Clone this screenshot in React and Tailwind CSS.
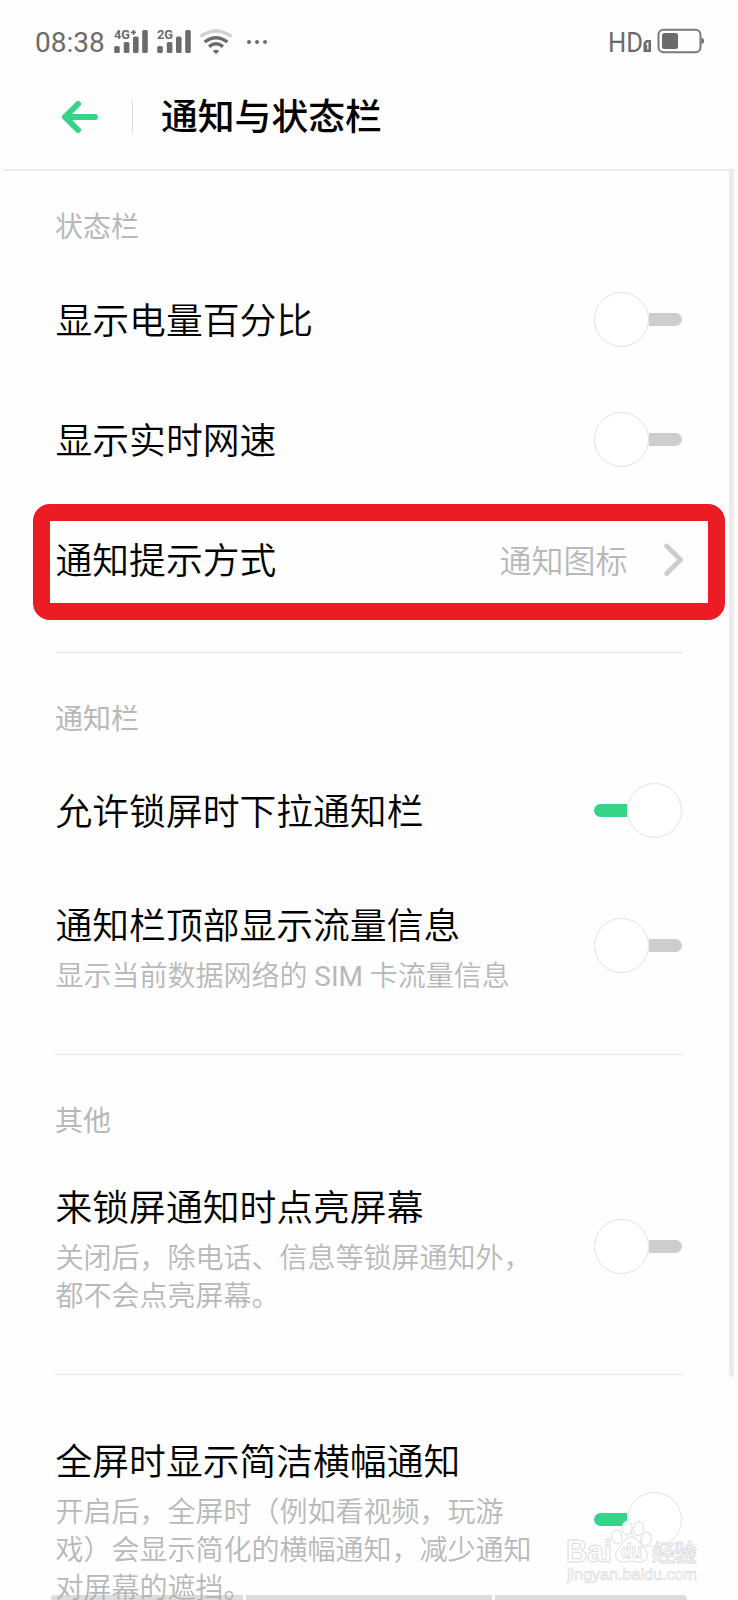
import React, { useState } from "react";

const sections = [
  {
    title: "状态栏",
    items: [
      { id: "battery", label: "显示电量百分比", on: false },
      { id: "speed", label: "显示实时网速", on: false },
      { id: "style", label: "通知提示方式", value: "通知图标" },
    ],
  },
  {
    title: "通知栏",
    items: [
      { id: "pulldown", label: "允许锁屏时下拉通知栏", on: true },
      {
        id: "traffic",
        label: "通知栏顶部显示流量信息",
        lines: [<>显示当前数据网络的 <span className="font-normal">SIM</span> 卡流量信息</>],
        on: false,
      },
    ],
  },
  {
    title: "其他",
    items: [
      { id: "wake", label: "来锁屏通知时点亮屏幕", lines: ["关闭后，除电话、信息等锁屏通知外，", "都不会点亮屏幕。"], on: false },
    ],
  },
  {
    items: [
      {
        id: "banner",
        label: "全屏时显示简洁横幅通知",
        lines: ["开启后，全屏时（例如看视频，玩游", "戏）会显示简化的横幅通知，减少通知", "对屏幕的遮挡。"],
        on: true,
      },
    ],
  },
];

const Signal = ({ label, plus }) => (
  <svg width="35" height="28" viewBox="0 -1 35 28" fill="#6b6b6b">
    <rect x="0.2" y="17" width="5.6" height="7" rx="1.6" />
    <rect x="9.8" y="13" width="5.6" height="11" rx="1.6" />
    <rect x="19" y="7.5" width="5.6" height="16.5" rx="1.6" />
    <rect x="28.2" y="1" width="5.6" height="23" rx="1.6" />
    <text x="0" y="10" fontSize="12.5" fontWeight="700" textLength="16" lengthAdjust="spacingAndGlyphs">{label}</text>
    {plus && <path d="M17 3.4H22M19.5 0.9V5.9" stroke="#6b6b6b" strokeWidth="1.6" />}
  </svg>
);

const Wifi = () => (
  <svg width="34" height="26" viewBox="0 0 34 26" fill="none" strokeWidth="3.4">
    <path d="M1.5 7.5Q17 -3.5 32.5 7.5" stroke="#d2d2d2" />
    <path d="M5.6 13Q17 4.3 28.4 13" stroke="#6b6b6b" />
    <path d="M10 17.6Q17 12 24 17.6" stroke="#6b6b6b" />
    <path d="M14.2 22.2Q17 20 19.8 22.2L17 24.6Z" fill="#6b6b6b" stroke="#6b6b6b" strokeWidth="0.8" />
  </svg>
);

const StatusBar = () => (
  <div className="flex h-[84px] items-center justify-between pr-[34px] pl-[35px] text-[#6b6b6b]">
    <div className="flex items-center">
      <span className="w-[70px] pt-[2px] text-[28px] leading-[28px]">08:38</span>
      <div className="ml-[9px] flex items-center gap-[8px]">
        <Signal label="4G" plus />
        <Signal label="2G" />
      </div>
      <div className="ml-[7px]"><Wifi /></div>
      <div className="ml-[14px] flex gap-[4px]">
        <span className="size-1 rounded-full bg-[#6b6b6b]" />
        <span className="size-1 rounded-full bg-[#6b6b6b]" />
        <span className="size-1 rounded-full bg-[#6b6b6b]" />
      </div>
    </div>
    <svg width="96" height="36" viewBox="0 -3 96 36" fill="#6b6b6b">
      <text x="0" y="25" fontSize="28" textLength="35" lengthAdjust="spacingAndGlyphs">HD</text>
      <path d="M38 13H43V25H35.5V16Z" />
      <path d="M38.2 17.5L39.8 16.2V22.5" fill="none" stroke="#fff" strokeWidth="1.3" />
      <rect x="50.5" y="2.7" width="42" height="22.6" rx="5" fill="none" stroke="#787878" strokeWidth="2" />
      <rect x="54" y="6" width="16" height="16" rx="2.5" />
      <path d="M93.5 11H94.5Q96 12 96 14T94.5 17H93.5Z" />
    </svg>
  </div>
);

const Toggle = ({ on, onClick }) => (
  <button
    onClick={onClick}
    className={`mr-px flex w-[88.5px] shrink-0 items-center ${on ? "flex-row-reverse" : ""}`}
  >
    <span className="size-[55px] shrink-0 rounded-full border border-[#e2e2e2] bg-white" />
    <span className={`h-[13px] flex-1 ${on ? "rounded-l-full bg-[#35d489]" : "rounded-r-full bg-[#cdcdcd]"}`} />
  </button>
);

const Row = ({ item, on, onToggle }) => (
  <div className={`flex items-center justify-between ${item.lines ? "pt-[25px] pb-[58px]" : "h-[120px]"}`}>
    <div className="pt-1.5 pl-[0.5px]">
      <p className="text-[36.8px] leading-[52px] font-[350] whitespace-nowrap text-black">{item.label}</p>
      {item.lines && (
        <p className="mt-[5px] text-[28px] leading-[38px] font-[350] whitespace-nowrap text-[#b8b8b8]">
          {item.lines.map((line, i) => <span key={i} className="block">{line}</span>)}
        </p>
      )}
    </div>
    {item.value ? (
      <div className="flex items-center gap-[36.5px] pt-px">
        <span className="pt-1 text-[32px] leading-[40px] font-[350] text-[#b8b8b8]">{item.value}</span>
        <svg width="19" height="34" viewBox="0 0 19 34" fill="none" stroke="#cdcdcd" strokeWidth="4.8" strokeLinecap="round" strokeLinejoin="round">
          <path d="M2.7 3L16.5 16.8L2.7 30.5" />
        </svg>
      </div>
    ) : (
      <Toggle on={on} onClick={onToggle} />
    )}
  </div>
);

const Paw = () => (
  <svg width="140" height="74" viewBox="0 0 140 74" className="absolute top-[1520px] left-[565px]" fill="#fff" stroke="#dcdcdc" strokeWidth="1">
    <g fillOpacity="0.85" fontFamily="Liberation Sans, Noto Sans CJK SC, sans-serif" fontWeight="700">
      <text x="1" y="42" fontSize="32" textLength="46" lengthAdjust="spacingAndGlyphs">Bai</text>
      <ellipse cx="52" cy="17" rx="5" ry="7" transform="rotate(-12 52 17)" />
      <ellipse cx="62" cy="8" rx="5" ry="7" />
      <ellipse cx="73.5" cy="8.5" rx="5" ry="7" transform="rotate(10 73.5 8.5)" />
      <ellipse cx="81" cy="19" rx="5" ry="7" transform="rotate(15 81 19)" />
      <path d="M66 17C60 17 59 23 54 28C49 33 49 41 58 42C62 42.5 65 41 67 41C70 41 73 42.5 76 42C84 41 84 33 79 28C74 23 72 17 66 17Z" />
      <text x="56" y="38" fontSize="20" textLength="21" lengthAdjust="spacingAndGlyphs" strokeWidth="0.9">du</text>
      <text x="87" y="41" fontSize="23" fontWeight="500" textLength="45">经验</text>
      <text x="2" y="60" fontSize="17" fontWeight="400" textLength="130" lengthAdjust="spacingAndGlyphs" strokeWidth="0.7">jingyan.baidu.com</text>
    </g>
  </svg>
);

export default function App() {
  const [checked, setChecked] = useState(
    Object.fromEntries(sections.flatMap((s) => s.items).map((item) => [item.id, item.on]))
  );

  const toggle = (id) => setChecked((prev) => ({ ...prev, [id]: !prev[id] }));

  return (
    <div className="relative h-[1600px] w-[738px] overflow-hidden bg-[#fefefe] font-['Roboto','Noto_Sans_CJK_SC',sans-serif]">
      <StatusBar />

      <header className="mx-[3px] flex h-[87px] items-center border-b-2 border-[#ededed] pb-[19px] pl-[57px]">
        <svg width="40" height="34" viewBox="0 0 40 34" fill="none" stroke="#35d489" strokeWidth="6" strokeLinecap="round" strokeLinejoin="round">
          <path d="M18 4L5 17L18 30M5 17H35" />
        </svg>
        <span className="ml-[32px] h-8 w-px bg-[#dcdcdc]" />
        <h1 className="ml-[28px] pt-[2px] text-[36.8px] leading-[52px] font-medium text-black">通知与状态栏</h1>
      </header>

      <main className="px-[55px]">
        {sections.map((section, index) => (
          <section key={section.items[0].id} className={index > 0 ? "border-t border-[#e4e4e4]" : ""}>
            {section.title && (
              <h2 className={`text-[28px] leading-[38px] font-normal text-[#b8b8b8] ${index === 0 ? "pt-[38px] pb-[12px]" : "pt-[48px] pb-[11px]"}`}>
                {section.title}
              </h2>
            )}
            <div className={index === 0 ? "pb-[33px]" : index === 3 ? "pt-[31px]" : ""}>
              {section.items.map((item) => (
                <Row key={item.id} item={item} on={checked[item.id]} onToggle={() => toggle(item.id)} />
              ))}
            </div>
          </section>
        ))}
      </main>

      {/* highlight around the third row */}
      <div className="pointer-events-none absolute top-[504px] left-[33px] h-[116px] w-[692px] rounded-[17px] border-[17px] border-[#eb1c24]" />

      <div className="absolute top-[171px] right-[4px] h-[1206px] w-[5px] rounded-b-full bg-[#ececec]" />

      <div className="absolute top-[1595px] left-[51px] flex h-[5px] gap-[3px]">
        <span className="w-[192px] rounded-tl-sm bg-[#aaaaaa]/40" />
        <span className="w-[246px] bg-[#aaaaaa]/40" />
        <span className="w-[192px] rounded-tr-sm bg-[#aaaaaa]/40" />
      </div>

      <Paw />
    </div>
  );
}
